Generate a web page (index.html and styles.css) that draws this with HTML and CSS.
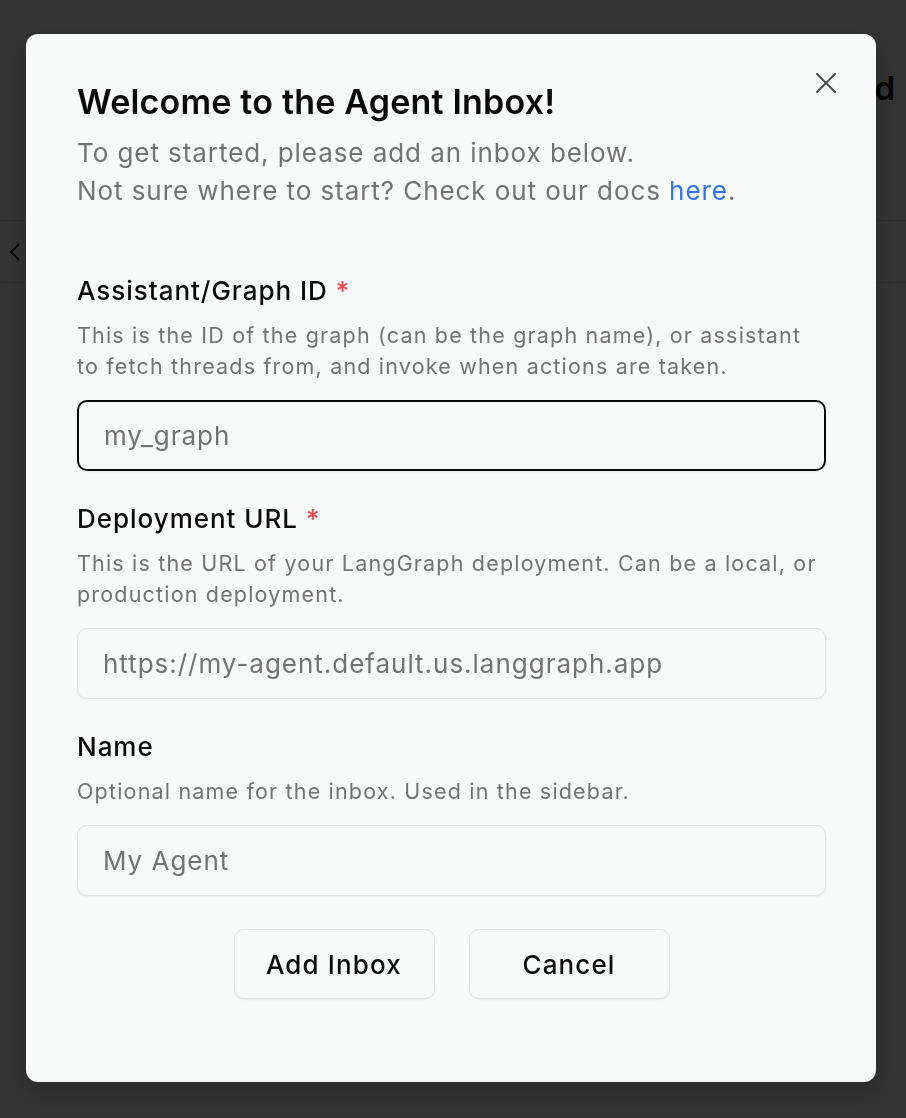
FILE: index.html
```html
<!DOCTYPE html>
<html lang="en">
<head>
<meta charset="utf-8">
<title>Agent Inbox</title>
<link rel="stylesheet" href="styles.css">
</head>
<body>
<div class="page">
  <header class="page-header">
    <span class="page-title">Interrupted</span>
  </header>
  <div class="page-toolbar">
    <svg class="chev" width="20" height="24" viewBox="0 0 20 24"><path d="M13 4 5 12l8 8" fill="none" stroke="#000" stroke-width="2"/></svg>
  </div>
</div>

<div class="overlay">
  <div class="dialog" role="dialog">
    <button class="close" aria-label="Close">
      <svg width="36" height="36" viewBox="0 0 24 24" fill="none" stroke="currentColor" stroke-width="1.3" stroke-linecap="round"><path d="M18 6 6 18M6 6l12 12"/></svg>
    </button>
    <div class="dialog-head">
      <h2 class="dialog-title">Welcome to the Agent Inbox!</h2>
      <p class="dialog-sub">To get started, please add an inbox below.<br>Not sure where to start? Check out our docs <a class="link" href="#">here</a>.</p>
    </div>
    <form class="form">
      <div class="field">
        <label class="label">Assistant/Graph ID <span class="req">*</span></label>
        <p class="desc">This is the ID of the graph (can be the graph name), or assistant to fetch threads from, and invoke when actions are taken.</p>
        <input class="input focused" placeholder="my_graph">
      </div>
      <div class="field">
        <label class="label">Deployment URL <span class="req">*</span></label>
        <p class="desc">This is the URL of your LangGraph deployment. Can be a local, or production deployment.</p>
        <input class="input" placeholder="https://my-agent.default.us.langgraph.app">
      </div>
      <div class="field">
        <label class="label">Name</label>
        <p class="desc">Optional name for the inbox. Used in the sidebar.</p>
        <input class="input" placeholder="My Agent">
      </div>
      <div class="actions">
        <button type="button" class="btn">Add Inbox</button>
        <button type="button" class="btn">Cancel</button>
      </div>
    </form>
  </div>
</div>
</body>
</html>
```

FILE: styles.css
```css
* { box-sizing: border-box; }
html, body { margin: 0; padding: 0; }
body {
  background: #ffffff;
  font-family: Inter, "Noto Sans", sans-serif;
  width: 906px;
  height: 1118px;
  overflow: hidden;
}

.page { width: 906px; }
.page-header {
  height: 221px;
  border-bottom: 1px solid #dcdcdc;
  display: flex;
  justify-content: flex-end;
  padding: 68px 11px 0 0;
}
.page-title {
  font-size: 33px;
  font-weight: 600;
  color: #000;
  line-height: 40px;
}
.page-toolbar {
  height: 62px;
  border-bottom: 1px solid #dcdcdc;
  display: flex;
  align-items: center;
  padding-left: 6px;
}

.overlay {
  position: fixed;
  inset: 0;
  background: rgba(0, 0, 0, 0.8);
  display: flex;
  align-items: flex-start;
  justify-content: center;
  padding: 34px 4px 0 0;
}

.dialog {
  position: relative;
  width: 850px;
  height: 1048px;
  background: #f8f9f9;
  border-radius: 12px;
  padding: 48px 50px 0 51px;
  box-shadow: 0 10px 25px rgba(0,0,0,0.2);
}

.close {
  position: absolute;
  top: 31px;
  right: 32px;
  width: 36px;
  height: 36px;
  padding: 0;
  border: none;
  background: transparent;
  color: #4a4a4a;
  display: flex;
}

.dialog-title {
  margin: 0;
  font-size: 34px;
  line-height: 40px;
  font-weight: 600;
  color: #0a0a0a;
  letter-spacing: 0.2px;
}
.dialog-sub {
  margin: 12px 0 0;
  font-size: 26px;
  line-height: 38px;
  color: #737373;
  letter-spacing: 0.93px;
}
.link { color: #2f74f0; text-decoration: none; }

.form {
  margin-top: 64px;
  display: flex;
  flex-direction: column;
  gap: 31px;
}
.field { display: flex; flex-direction: column; }
.label {
  font-size: 26px;
  line-height: 33px;
  font-weight: 500;
  color: #0a0a0a;
  letter-spacing: 0.97px;
}
.req { color: #e5484d; }
.desc {
  margin: 13px 0 0;
  font-size: 21.5px;
  line-height: 31px;
  color: #737373;
  letter-spacing: 1.18px;
}
.input {
  margin-top: 18px;
  height: 71px;
  width: 100%;
  border: 1.5px solid #e2e2e2;
  border-radius: 10px;
  background: #f8f9f9;
  padding: 0 25px;
  font-family: Inter, "Noto Sans", sans-serif;
  font-size: 26px;
  letter-spacing: 0.98px;
  color: #0a0a0a;
  box-shadow: 0 1px 2px rgba(0,0,0,0.05);
  outline: none;
}
.input::placeholder { color: #737373; }
.input.focused { border: 2px solid #0a0a0a; }

.actions {
  margin-top: 2px;
  display: flex;
  justify-content: center;
  gap: 34px;
}
.btn {
  width: 201px;
  height: 70px;
  border: 1.5px solid #e2e2e2;
  border-radius: 10px;
  background: #f8f9f9;
  font-family: Inter, "Noto Sans", sans-serif;
  font-size: 26px;
  font-weight: 500;
  letter-spacing: 1.14px;
  color: #0a0a0a;
  box-shadow: 0 1px 2px rgba(0,0,0,0.06);
}
```
